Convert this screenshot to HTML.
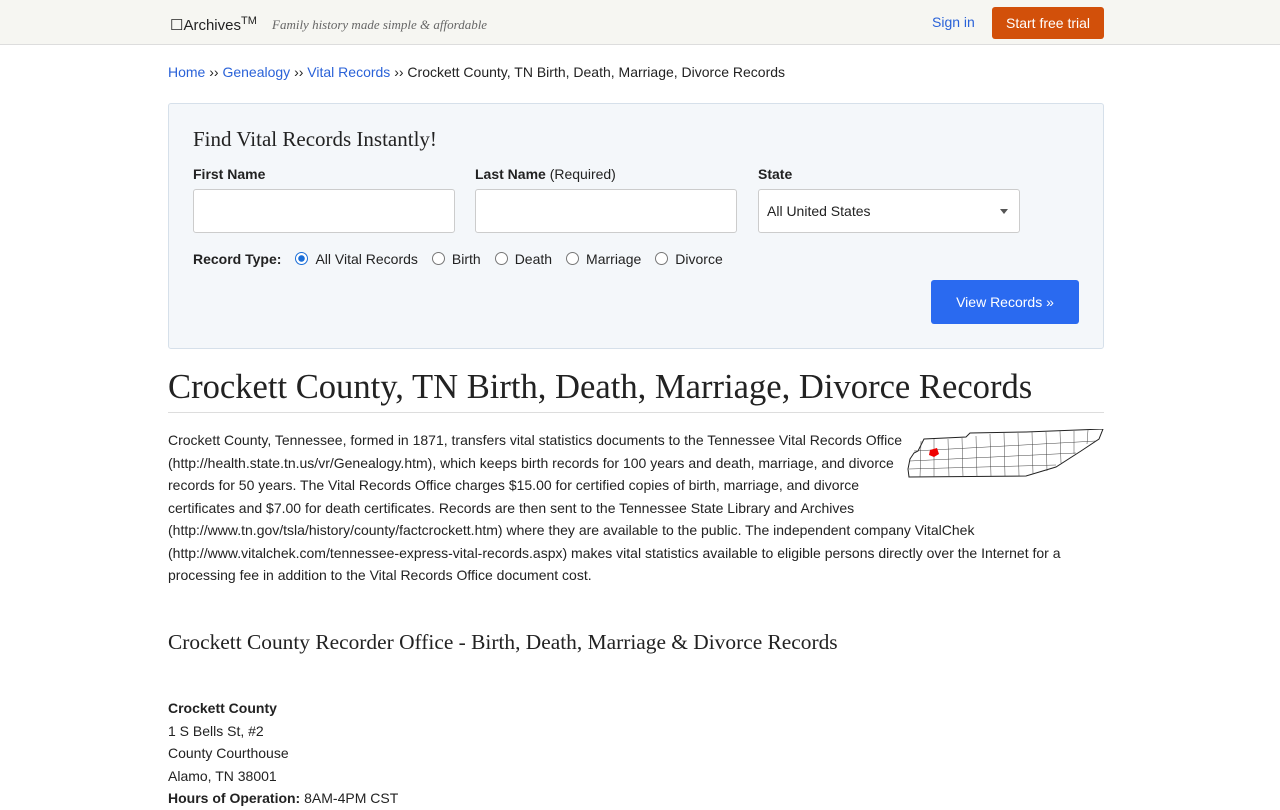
<!DOCTYPE html>
<html><head><meta charset="utf-8"><style>
*{box-sizing:border-box}
body{margin:0;font-family:"Liberation Sans",Arial,sans-serif;font-size:14px;color:#222;background:#fff}
a{color:#2a62d8;text-decoration:none}
.hdr{height:45px;background:#f6f6f2;border-bottom:1px solid #ddd;position:relative}
.wrap{width:936px;position:absolute;left:168px;top:0}
.logo{position:absolute;left:2px;top:15px;font-size:15px;color:#222}
.logo sup{font-size:11px}
.tag{position:absolute;left:104px;top:17px;font-family:"Liberation Serif",serif;font-style:italic;font-size:13px;color:#666}
.signin{position:absolute;left:764px;top:14px;font-size:14px}
.trial{position:absolute;left:824px;top:7px;width:112px;height:32px;background:#d2500a;color:#fff;border-radius:3px;font-size:14px;text-align:center;line-height:32px}
.bc{position:absolute;top:64px;left:0;font-size:14px}
.box{position:absolute;top:103px;left:0;width:936px;height:246px;background:#f4f7fa;border:1px solid #d6e0ea;border-radius:3px}
.box h3{position:absolute;left:24px;top:23px;margin:0;font-family:"Liberation Serif",serif;font-weight:normal;font-size:21px}
.lbl{position:absolute;top:62px;font-weight:bold;font-size:14px}
.lbl span{font-weight:normal}
.inp{position:absolute;top:85px;width:262px;height:44px;background:#fff;border:1px solid #ccc;border-radius:3px}
.rt{position:absolute;top:147px;left:24px;font-size:14px}
.rd{display:inline-block;width:13px;height:13px;border:1px solid #777;border-radius:50%;vertical-align:-1px;margin:0 7px 0 14px;background:#fff}
.rd.on{border:1px solid #1a6ed8;background:radial-gradient(circle,#1a6ed8 3px,#fff 3.5px)}
.btn{position:absolute;left:762px;top:176px;width:148px;height:44px;background:#2a6af0;color:#fff;border-radius:3px;text-align:center;line-height:44px;font-size:14px}
h1{position:absolute;top:367px;left:0;margin:0;width:936px;font-family:"Liberation Serif",serif;font-weight:normal;font-size:34.6px;line-height:40px;padding-bottom:5px;border-bottom:1px solid #ddd}
.p{position:absolute;top:429px;left:0;width:936px;line-height:22.5px;font-size:14px}
.map{float:right;margin:0 0 40px 0}
h2{position:absolute;top:630px;left:0;margin:0;font-family:"Liberation Serif",serif;font-weight:normal;font-size:21.4px}
.addr{position:absolute;top:697px;left:0;line-height:22.5px}
</style></head><body>
<div class="hdr"><div class="wrap">
<div class="logo">☐Archives<sup>TM</sup></div>
<div class="tag">Family history made simple &amp; affordable</div>
<a class="signin">Sign in</a>
<div class="trial">Start free trial</div>
</div></div>
<div class="wrap">
<div class="bc"><a>Home</a> ›› <a>Genealogy</a> ›› <a>Vital Records</a> ›› Crockett County, TN Birth, Death, Marriage, Divorce Records</div>
<div class="box">
<h3>Find Vital Records Instantly!</h3>
<div class="lbl" style="left:24px">First Name</div>
<div class="lbl" style="left:306px">Last Name <span>(Required)</span></div>
<div class="lbl" style="left:589px">State</div>
<div class="inp" style="left:24px"></div>
<div class="inp" style="left:306px"></div>
<div class="inp" style="left:589px;padding:13px 8px;font-size:14px">All United States<span style="position:absolute;right:11px;top:19px;border:4px solid transparent;border-top:5px solid #555"></span></div>
<div class="rt"><b>Record Type:</b><span class="rd on"></span>All Vital Records<span class="rd"></span>Birth<span class="rd"></span>Death<span class="rd"></span>Marriage<span class="rd"></span>Divorce</div>
<div class="btn">View Records »</div>
</div>
<h1>Crockett County, TN Birth, Death, Marriage, Divorce Records</h1>
<div class="p"><svg class="map" width="198" height="50" viewBox="0 0 198 50"><path d="M4 30 L8 24 L12 22 L18 10 L60 8 L64 4 L120 3 L197 0 L193 10 L175 22 L150 38 L120 47 L3 48 L2 40 Z" fill="#fff" stroke="#222" stroke-width="1"/><g stroke="#444" stroke-width=".5" fill="none"><path d="M15 12 L14 48 M28 10 L28 48 M42 10 L43 48 M56 9 L57 48 M70 7 L71 48 M84 5 L85 48 M98 4 L99 47 M112 4 L113 47 M126 3 L127 45 M140 3 L141 42 M154 2 L155 34 M168 2 L168 25 M182 1 L181 15 M8 22 L190 12 M4 32 L170 24 M3 40 L150 36"/></g><path d="M24 21 L31 19 L33 25 L28 28 L23 26 Z" fill="#e00"/></svg>Crockett County, Tennessee, formed in 1871, transfers vital statistics documents to the Tennessee Vital Records Office (http://health.state.tn.us/vr/Genealogy.htm), which keeps birth records for 100 years and death, marriage, and divorce records for 50 years. The Vital Records Office charges $15.00 for certified copies of birth, marriage, and divorce certificates and $7.00 for death certificates. Records are then sent to the Tennessee State Library and Archives (http://www.tn.gov/tsla/history/county/factcrockett.htm) where they are available to the public. The independent company VitalChek (http://www.vitalchek.com/tennessee-express-vital-records.aspx) makes vital statistics available to eligible persons directly over the Internet for a processing fee in addition to the Vital Records Office document cost.</div>
<h2>Crockett County Recorder Office - Birth, Death, Marriage &amp; Divorce Records</h2>
<div class="addr"><b>Crockett County</b><br>1 S Bells St, #2<br>County Courthouse<br>Alamo, TN 38001<br><b>Hours of Operation:</b> 8AM-4PM CST</div>
</div>
</body></html>
